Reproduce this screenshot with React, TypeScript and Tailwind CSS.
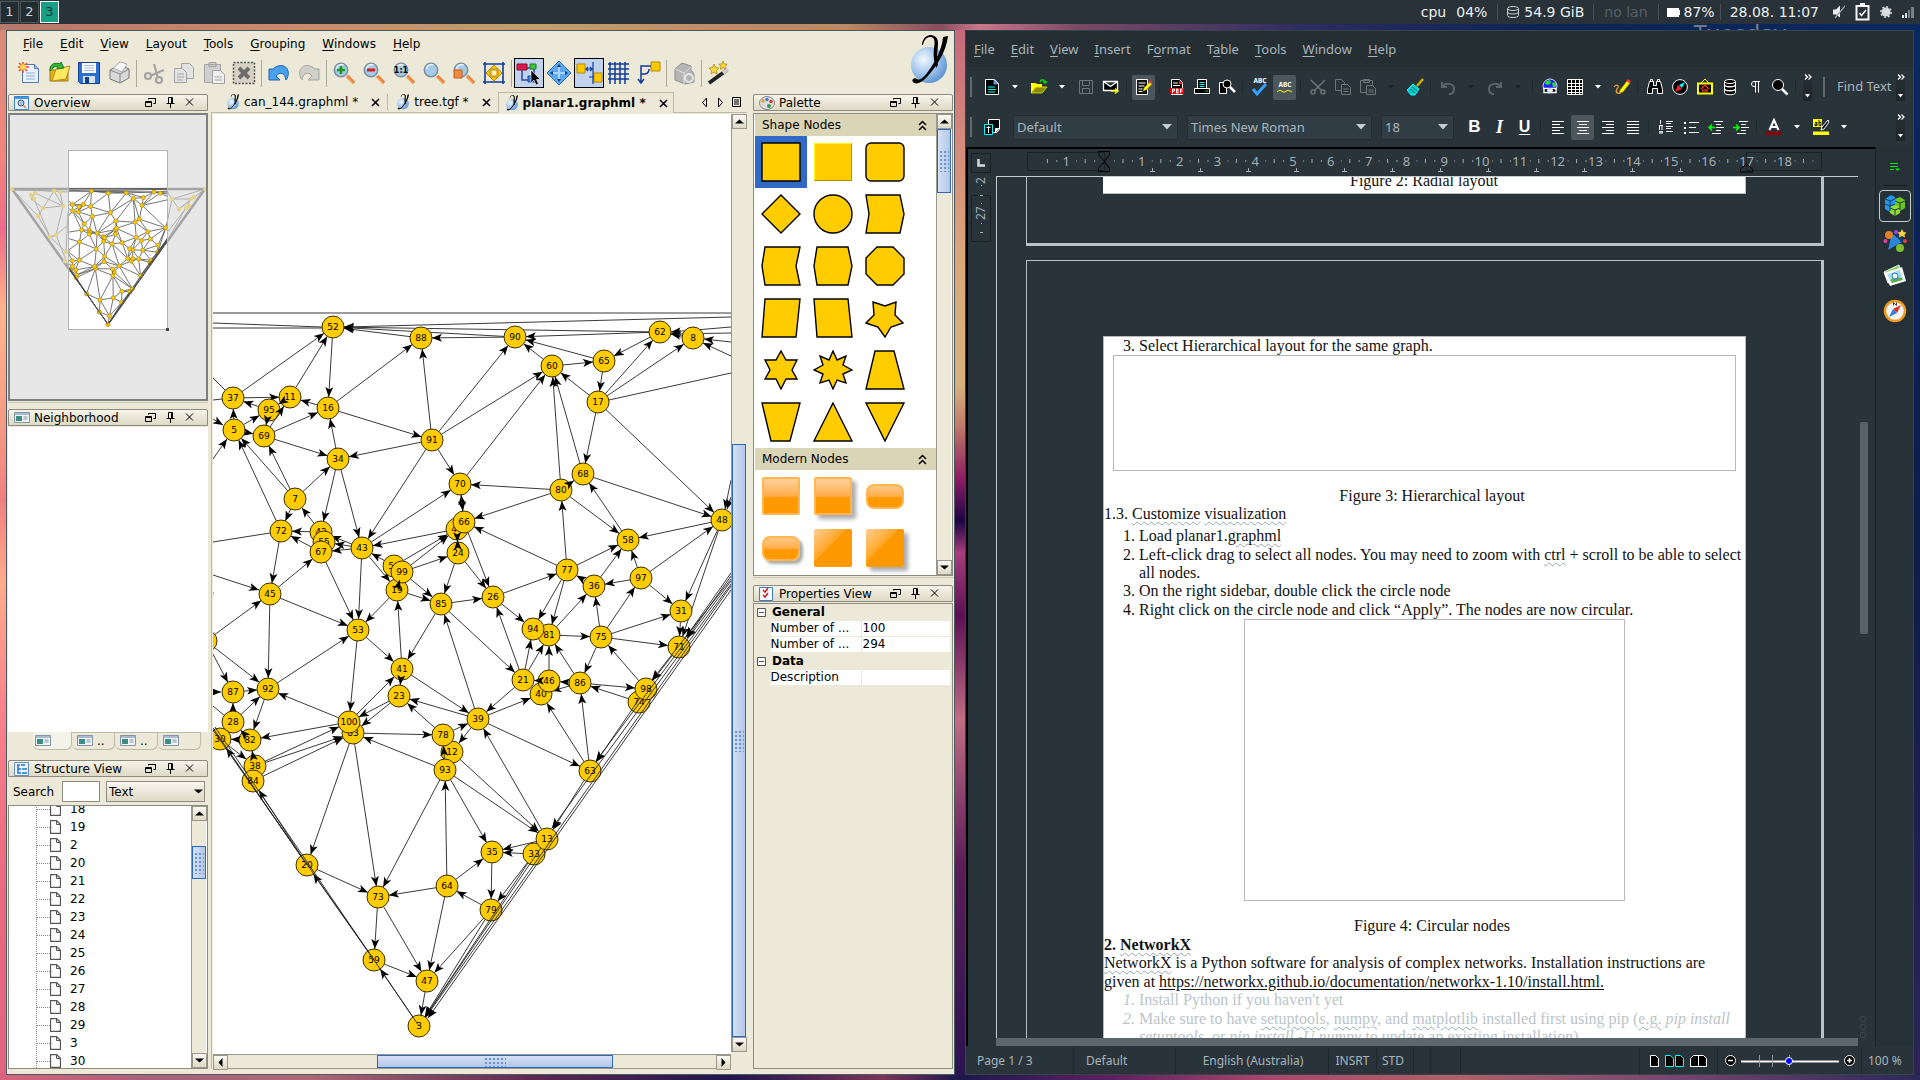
import React from "react";

type P = { children?: React.ReactNode };

/* ---------- graph data ---------- */
const N: Record<string, [number, number]> = {
  "54": [206, 641], "52": [333, 327], "88": [421, 338], "90": [515, 337], "62": [660, 332], "8": [693, 338],
  "65": [604, 361], "17": [598, 402], "60": [552, 366], "37": [233, 398], "11": [290, 397], "95": [269, 410],
  "16": [328, 408], "5": [234, 430], "69": [264, 436], "91": [432, 440], "34": [338, 459], "7": [295, 499],
  "70": [460, 484], "80": [561, 490], "68": [583, 474], "44": [457, 529], "66": [464, 522], "24": [458, 553],
  "72": [281, 531], "42": [321, 532], "55": [324, 542], "67": [321, 552], "43": [362, 548], "50": [394, 566],
  "19": [397, 590], "99": [402, 572], "85": [441, 604], "26": [493, 597], "77": [567, 570], "36": [594, 586],
  "97": [641, 578], "58": [628, 540], "48": [722, 520], "31": [681, 611], "71": [679, 647], "81": [549, 635],
  "94": [533, 629], "75": [601, 637], "45": [270, 594], "53": [358, 630], "41": [402, 669], "21": [523, 680],
  "40": [541, 694], "46": [549, 681], "86": [580, 683], "74": [639, 702], "98": [646, 689], "92": [268, 689],
  "87": [233, 692], "23": [399, 696], "28": [233, 722], "30": [220, 739], "82": [250, 740], "38": [255, 766],
  "84": [253, 781], "83": [353, 733], "100": [349, 722], "12": [452, 752], "78": [443, 735], "93": [445, 770],
  "39": [478, 719], "63": [590, 771], "13": [547, 839], "33": [534, 854], "35": [492, 852], "20": [307, 865],
  "64": [447, 886], "79": [491, 910], "73": [378, 897], "59": [374, 960], "47": [427, 981], "3": [419, 1026],
};
const DRAW = ["54", "52", "88", "90", "62", "8", "65", "17", "60", "37", "95", "11", "16", "5", "69", "91", "34", "7", "70", "80", "68", "44", "66", "24", "72", "42", "55", "67", "43", "50", "19", "99", "85", "26", "77", "36", "97", "58", "48", "31", "71", "81", "94", "75", "45", "53", "41", "21", "40", "46", "86", "74", "98", "92", "87", "23", "28", "30", "82", "38", "84", "83", "100", "12", "78", "93", "39", "63", "33", "13", "35", "20", "64", "79", "73", "59", "47", "3"];
const E =
  "11-52 37-52 52-16 16-88 91-88 16-11 16-91 34-16 69-16 37-11 95-37 5-37 5-95 5-69 69-34 91-34 7-34 7-69 7-5 72-5 7-72 42-7 42-72 67-72 34-42 34-43 91-43 43-70 91-70 91-90 91-60 70-60 60-90 65-90 60-65 65-17 17-60 17-62 17-8 62-65 8-62 90-88 62-90 17-68 17-48 68-48 68-60 80-60 80-70 80-66 80-58 58-68 48-58 77-66 77-80 77-58 36-77 36-58 97-58 97-36 97-48 97-31 75-31 75-36 75-97 75-71 81-75 81-36 77-81 77-94 26-77 26-94 66-26 24-26 66-70 44-43 50-44 99-44 99-24 43-55 43-67 43-42 50-43 43-19 99-85 19-85 24-85 85-26 85-21 85-41 39-85 21-26 21-94 21-81 46-81 86-81 86-46 86-40 75-86 86-98 98-75 74-86 63-86 63-40 39-40 21-39 39-63 39-23 41-39 41-19 53-41 19-53 43-53 67-53 45-67 72-45 45-53 45-92 92-53 53-100 100-41 23-100 23-83 100-92 100-82 92-82 87-92 28-92 28-87 38-100 38-83 84-83 30-38 83-78 78-23 78-39 39-12 93-83 12-13 93-13 93-35 93-73 64-93 64-35 64-73 64-47 79-64 35-79 13-35 33-35 13-39 79-47 79-3 73-47 73-59 59-47 47-3 20-73 83-20 83-73 48-31 48-71 31-71 54-45 54-92 54-87 90-52 88-52 62-52".split(" ");
const OVER = "95-69 69-11 11-95 80-68 70-66 44-24 24-44 19-99 41-23 46-21 93-78 82-28 82-30 38-82 33-79 59-20 3-59 20-84 20-30 71-98 98-63 63-13 13-3 33-3".split(" ");
type L = [number, number, number, number, boolean];
const LOOSE: L[] = [
  [213, 323, 322, 327, false], [213, 328, 322, 328, false], [731, 317, 344, 327, true], [731, 327, 671, 332, true],
  [731, 333, 671, 334, true], [731, 342, 704, 339, true], [731, 356, 703, 343, true], [609, 400, 731, 373, false],
  [213, 378, 225, 390, false], [213, 400, 222, 399, false], [213, 419, 223, 425, true], [213, 459, 227, 439, true],
  [270, 533, 213, 542, false], [213, 575, 259, 590, true], [731, 480, 725, 509, true], [731, 497, 727, 509, true],
  [213, 692, 221, 692, true], [213, 706, 225, 716, false], [213, 592, 208, 630, false],
];
const LONG: L[] = [
  [205, 313, 740, 313, false], [731, 573, 686, 637, true], [731, 576, 687, 638, true], [731, 579, 652, 680, true],
  [731, 581, 596, 761, true], [731, 584, 552, 828, true], [731, 586, 426, 1017, true], [731, 590, 428, 1018, true],
  [213, 728, 307, 865, false], [213, 730, 374, 960, false], [215, 727, 419, 1026, false],
];

function seg(id: string): L {
  const [a, b] = id.split("-");
  const [x1, y1] = N[a], [x2, y2] = N[b];
  const d = Math.hypot(x2 - x1, y2 - y1) || 1;
  const ux = (x2 - x1) / d, uy = (y2 - y1) / d;
  const r = Math.min(11, d / 2 - 1);
  return [x1 + ux * r, y1 + uy * r, x2 - ux * r, y2 - uy * r, true];
}

function Lines({ list, mini }: { list: L[]; mini?: boolean }) {
  return (
    <g stroke={mini ? "#4a4a4a" : "#222"} strokeWidth={mini ? 4 : 0.9}>
      {list.map(([a, b, c, d, arrow], i) => (
        <line key={i} x1={a} y1={b} x2={c} y2={d} markerEnd={arrow && !mini ? "url(#arrow)" : undefined} />
      ))}
    </g>
  );
}

function Graph({ mini }: { mini?: boolean }) {
  return (
    <g>
      <Lines list={[...E.map(seg), ...LOOSE]} mini={mini} />
      {DRAW.map((n) => (
        <g key={n}>
          <circle cx={N[n][0]} cy={N[n][1]} r={11} fill="#ffcc00" stroke={mini ? "#8a7420" : "#3a3000"} strokeWidth={mini ? 3 : 1} />
          {!mini && (
            <text x={N[n][0]} y={N[n][1] + 3} textAnchor="middle" fontSize={9} fill="#000">{n}</text>
          )}
        </g>
      ))}
      <Lines list={[...OVER.map(seg), ...LONG]} mini={mini} />
    </g>
  );
}

/* ---------- yEd pieces ---------- */
const YBG = "bg-[#ece9d8]";

function YLogo({ s }: { s: number }) {
  return (
    <svg width={s} height={s} viewBox="0 0 40 50">
      <defs>
        <radialGradient id="ball" cx=".35" cy=".35" r=".7">
          <stop offset="0" stopColor="#f4f9ff" /><stop offset=".6" stopColor="#9cc2ea" /><stop offset="1" stopColor="#5b93cf" />
        </radialGradient>
      </defs>
      <circle cx="20" cy="30" r="18" fill="url(#ball)" />
      <path d="M14 10C15 4 19 1.500 22 2C26 3 26 7 25 13C24 20 25 27 27 33L29 30C27 22 29 14 29 8C29 2 25 0 21 0C16 1 13 5 13 10z" />
      <path d="M39 1C37 17 28 31 17 43C12 48 7 50 4 47C2 44 6 42 8 44C11 46 15 42 18 38C27 26 33 14 34 2z" />
    </svg>
  );
}

function TitleBar({ title, icon }: { title: string; icon: React.ReactNode }) {
  return (
    <div className="flex h-[17px] shrink-0 items-center rounded-t-xs border border-[#8d8b80] bg-linear-to-b from-[#f6f4ea] to-[#dedac6] pl-[5px] pr-[13px]">
      <span className="flex w-[20px]">{icon}</span>
      <span className="flex-1 text-[12px] leading-4">{title}</span>
      <span className="flex gap-[9px]">
        <button aria-label={"Float " + title}><svg width="11" height="11" viewBox="0 0 11 11" fill="none" stroke="#000"><path d="M.5 4.5h6v5h-6zM.5 5.5h6M3.500 2.500v-1h7v5h-2M3.500 1.500h7" /></svg></button>
        <button aria-label={"Pin " + title}><svg width="11" height="11" viewBox="0 0 11 11" fill="none" stroke="#000"><path d="M3.500.5h4v6h-4zM6.500 1v5M1.500 6.500h8M5.500 7v4" /></svg></button>
        <button aria-label={"Close " + title}><svg width="9" height="11" viewBox="0 0 9 11" fill="none" stroke="#000"><path d="M1 1.500l7 7M8 1.500l-7 7" /></svg></button>
      </span>
    </div>
  );
}

const WinIcon = () => (
  <svg width="16" height="12" viewBox="0 0 16 12"><path d="M.5.5h15v10H.5z" fill="#f2f5f8" stroke="#8493a5" /><path d="M1 1h14v2H1z" fill="#a9bccf" /><path d="M2 4h6v5H2z" fill="#3c8c82" /><path d="M9.500 5h4M9.500 7h4" stroke="#8493a5" /></svg>
);

const DOTS = "bg-[radial-gradient(#6c93d0_0.8px,transparent_1px)] bg-[size:4px_4px]";

function SBtn({ d, label }: { d: string; label: string }) {
  return (
    <button aria-label={label} className="flex size-[15px] shrink-0 items-center justify-center border border-[#9a988a] bg-linear-to-b from-[#fbfaf4] to-[#dcd8c4]">
      <svg width="9" height="9" viewBox="0 0 9 9"><path d={d} /></svg>
    </button>
  );
}
const UP = "M0 6.500L4.500 2.500L9 6.500z", DOWN = "M0 2.500L4.500 6.500L9 2.500z", LEFT = "M6.500 0L2.500 4.500L6.500 9z", RIGHT = "M2.500 0L6.500 4.500L2.500 9z";

function VScroll({ thumb, before, after }: { thumb: string; before: string; after: string }) {
  return (
    <div className="flex w-[15px] shrink-0 flex-col border-l border-[#9a988a] bg-[#ece9d8]">
      <SBtn d={UP} label="Scroll up" />
      <div className={before} />
      <div className={"flex w-full items-center justify-center border border-[#2f66c0] bg-linear-to-r from-[#d4e1f5] to-[#b3c8e6] " + thumb}>
        <div className={"h-[22px] w-[10px] " + DOTS} />
      </div>
      <div className={after} />
      <SBtn d={DOWN} label="Scroll down" />
    </div>
  );
}

const lens = (inner: React.ReactNode) => (
  <g>
    <path d="M15 15l7 7" stroke="#e8843c" strokeWidth="3.6" /><path d="M14.500 16l6.500 6.500" stroke="#fbc08a" strokeWidth="1" />
    <circle cx="9" cy="9" r="6.700" fill="#a5cbe8" stroke="#7b8fa0" strokeWidth="1.500" /><path d="M4.500 8a5 5 0 0 1 7-4" stroke="#e8f5ff" strokeWidth="1.500" fill="none" />
    {inner}
  </g>
);
const YI: Record<string, React.ReactNode> = {
  New: <g><path d="M5.500 3.500h12l4 4v14h-16z" fill="#e8f1fc" stroke="#5578b4" /><path d="M17.500 3.500v4h4" fill="#9fbce4" stroke="#5578b4" /><path d="M9 12h9M9 15h9M9 18h9" stroke="#a9c3e8" strokeWidth="1.500" /><path d="M6 1v11M1 6h11M2 2l8 8M10 2l-8 8" stroke="#f04a2a" strokeWidth="1.500" /><circle cx="6" cy="6" r="3" fill="#ffd24a" /></g>,
  Open: <g><path d="M3 20V9h7l2 2h9v9z" fill="#e0b41c" stroke="#a07c10" /><path d="M5 20l4-12 14-3-4 13z" fill="#ffe75e" stroke="#b28e18" /><path d="M3 10C2 3 8 1 13 3l1-2 3 6-7 1 1-2C8 5 6 6 3 10z" fill="#37b437" stroke="#1d7a1d" /></g>,
  Save: <g><path d="M1.500 1.500h21v21h-19l-2-2z" fill="#2c6fd0" stroke="#12408a" /><path d="M5 2h14v10H5z" fill="#fff" /><path d="M7 4.500h10M7 7h10M7 9.500h10" stroke="#9db9d8" /><path d="M6 15h12v7H6z" fill="#d8e2ee" /><path d="M8 16h4v6H8z" fill="#12408a" /></g>,
  Print: <g><path d="M3 9l9-5 10 4v9l-9 5-10-4z" fill="#d9d9d9" stroke="#777" /><path d="M3 9l10 4v9M13 13l9-5" fill="none" stroke="#888" /><path d="M6 7l7-6 7 2-5 8z" fill="#fafafa" stroke="#aaa" /></g>,
  Cut: <g fill="none" stroke="#a3a3a3" strokeWidth="2.200"><path d="M12 3l4 14M22 9L8 15" /><circle cx="17" cy="19" r="3" /><circle cx="6" cy="15" r="3" /></g>,
  Copy: <g fill="#e2e2e2" stroke="#a3a3a3"><path d="M9.500 2.500h8l4 4v11h-12z" /><path d="M2.500 7.500h8l4 4v10h-12z" /><path d="M5 13h7M5 16h7M5 19h6" /></g>,
  Paste: <g fill="#cfcfcf" stroke="#a3a3a3"><path d="M2.500 3.500h16v18h-16zM7 1.500h7v4H7z" /><path d="M10.500 9.500h8l4 4v9h-12z" fill="#eee" /><path d="M13 16h7M13 19h7" /></g>,
  Delete: <g><path d="M1.500 1.500h21v21h-21z" fill="#d5d2c4" stroke="#555" strokeDasharray="2 1.500" strokeWidth="1.500" /><path d="M7 7l10 10M17 7L7 17" stroke="#6c6c6c" strokeWidth="4" /></g>,
  Undo: <path d="M2 8v11h11l-4-4c4-5 9-3 10 4 7-10-3-20-13-11z" fill="#4aa2ee" stroke="#1e63ad" />,
  Redo: <path d="M22 8v11H11l4-4c-4-5-9-3-10 4C-2 9 8-1 18 8z" fill="#d0d0c8" stroke="#a5a5a0" />,
  "Zoom in": lens(<path d="M9 5v8M5 9h8" stroke="#1c9a1c" strokeWidth="2.600" />),
  "Zoom out": lens(<path d="M5 9h8" stroke="#d02020" strokeWidth="3" />),
  "Zoom 1:1": lens(<text x="9" y="12" fontSize="8" fontWeight="700" textAnchor="middle">1:1</text>),
  Zoom: lens(null),
  "Zoom area": lens(<path d="M2 9h8v8H2z" fill="#f08a3c" stroke="#c2601c" />),
  Fit: <g><path d="M3 1v22M21 1v22M1 3h22M1 21h22" stroke="#123c9c" strokeWidth="1.600" /><path d="M12 4l4 4H8zM12 20l4-4H8zM4 12l4-4v8zM20 12l-4-4v8z" fill="#ffc800" stroke="#c08a00" /><path d="M9 9h6v6H9z" fill="#fff2b0" stroke="#c08a00" /></g>,
  Select: <g><path d="M5 7h12v12H5z" fill="none" stroke="#2c4aa0" strokeWidth="1.500" /><path d="M0 3h10v6H0z" fill="#e0184c" stroke="#7c0c2c" /><path d="M13 3h6v5h-6z" fill="#3cc83c" stroke="#1c7c1c" /><path d="M11 15h7v6h-7z" fill="#3c7cd8" stroke="#1c4a8c" /><path d="M14 9v13l3-3 2 5 2.500-1-2-4.500h4z" fill="#000" stroke="#fff" strokeWidth=".6" /></g>,
  Move: <g><path d="M12 0l12 12-12 12L0 12z" fill="#5aa8f0" stroke="#2e6cb8" /><path d="M12 4v16M4 12h16" stroke="#a8d4ff" strokeWidth="2" /><path d="M12 3l2 3h-4zM12 21l2-3h-4zM3 12l3-2v4zM21 12l-3-2v4z" fill="#123c7c" /></g>,
  Snap: <g><path d="M0 3h8v9H0zM17 12h8v9h-8z" fill="#ffc800" stroke="#b28a00" /><path d="M16 1v22M9 8h6M11 6L9 8l2 2M13 6l2 2-2 2M12 16h5" fill="none" stroke="#123c9c" strokeWidth="1.200" /></g>,
  Grid: <path d="M3 1v22M8 1v22M13 1v22M18 1v22M1 3h21M1 8h21M1 13h21M1 18h21" stroke="#123c9c" strokeWidth="1.500" fill="none" />,
  Orthogonal: <g><path d="M14 1h9v9h-9z" fill="#ffc800" stroke="#b28a00" /><path d="M14 5H4v17M1 18l3 4 3-4M4 13h4a5 5 0 0 0 4-5" stroke="#123c9c" strokeWidth="1.500" fill="none" /></g>,
  Package: <g><path d="M3 8l7-6 9 3v4l3 4v8l-9 2-10-4z" fill="#b5b5b5" stroke="#8d8d8d" /><path d="M3 8l9 4v11M12 12l7-6" stroke="#ddd" fill="none" /><circle cx="17" cy="17" r="4" fill="none" stroke="#e5e5e5" strokeWidth="2" /></g>,
  Wand: <g><path d="M2 22L20 9" stroke="#222" strokeWidth="4" /><path d="M16 12l5-4" stroke="#ccc" strokeWidth="4" /><path d="M7 3l1.500 3.500 3.500.500-2.500 2.500.5 3.500-3-2-3 2 .5-3.500L2 7l3.500-.5zM16 0l1.200 3 3 .3-2.200 2 .6 3-2.600-1.700-2.600 1.700.6-3-2.200-2 3-.3z" fill="#ffd83c" stroke="#b28a10" strokeWidth=".8" /></g>,
};
const YTOOLS = ["New", "Open", "Save", "Print", "|", "Cut", "Copy", "Paste", "Delete", "|", "Undo", "Redo", "|", "Zoom in", "Zoom out", "Zoom 1:1", "Zoom", "Zoom area", "Fit", "|", "Select", "Move", "Snap", "Grid", "Orthogonal", "|", "Package", "|", "Wand"];

function Menu({ label, at = 0 }: { label: string; at?: number }) {
  return <>{label.slice(0, at)}<span className="underline underline-offset-2">{label[at]}</span>{label.slice(at + 1)}</>;
}

const SHAPES: React.ReactNode[] = [
  <path d="M1 1h38v38H1z" />,
  <g stroke="none"><path d="M1 1h38v38H1z" /><path d="M1 1h38v1H2v37H1z" fill="#ffff00" /><path d="M39 1v38H1l1-1h36V2z" fill="#b38f00" /></g>,
  <rect x="1" y="1" width="38" height="38" rx="5" />,
  <path d="M20 1l19 19-19 19L1 20z" />,
  <circle cx="20" cy="20" r="19" />,
  <path d="M1 1h34l4 19-4 19H1l3-19z" />,
  <path d="M4 1h35l-4 19 4 19H4L1 20z" />,
  <path d="M4 1h31l4 19-4 19H4L1 20z" />,
  <path d="M12 1h16l11 11v16L28 39H12L1 28V12z" />,
  <path d="M4 1h35l-4 38H1z" />,
  <path d="M1 1h34l4 38H4z" />,
  <path d="M8 4l12 4 11-4-1 13 8 8-12 4-6 10-7-10-12-4 8-8z" />,
  <path d="M20 1l5 9h11l-5 10 5 9H25l-5 10-5-10H4l5-9-5-10h11z" />,
  <path d="M20 1l4 9 9-4-3 9 9 5-9 4 3 9-9-3-4 9-4-9-9 3 3-9-9-4 9-5-3-9 9 4z" />,
  <path d="M10 1h19l10 38H1z" />,
  <path d="M1 1h38l-10 38H10z" />,
  <path d="M20 1l19 38H1z" />,
  <path d="M1 1h38L20 39z" />,
];

const MODERN: [string, string][] = [
  ["Bevel", "h-[38px] rounded-xs border-2 border-[#ffb650] bg-linear-to-b from-[#ffd09a] from-0% via-[#ffad48] via-50% to-[#ff9900] to-55%"],
  ["Bevel with shadow", "h-[38px] rounded-xs border-2 border-[#ffb650] bg-linear-to-b from-[#ffd09a] from-0% via-[#ffad48] via-50% to-[#ff9900] to-55% shadow-[4px_4px_4px_#0005]"],
  ["Pill", "h-[25px] rounded-lg border-2 border-[#ffb650] bg-linear-to-b from-[#ffc885] from-0% via-[#ffae45] via-50% to-[#ff9900] to-55%"],
  ["Pill with shadow", "h-[25px] rounded-lg border-2 border-[#ffb650] bg-linear-to-b from-[#ffc885] from-0% via-[#ffae45] via-50% to-[#ff9900] to-55% shadow-[3px_3px_3px_#0005]"],
  ["Glass", "h-[38px] rounded-xs bg-[linear-gradient(135deg,#ffcf96_0%,#ffa726_42%,#ff9900_44%)]"],
  ["Glass with shadow", "h-[38px] rounded-xs bg-[linear-gradient(135deg,#ffcf96_0%,#ffa726_42%,#ff9900_44%)] shadow-[4px_4px_4px_#0005]"],
];

function GroupHead({ t }: { t: string }) {
  return (
    <div className="flex h-[22px] items-center justify-between bg-[#dbd5b8] pl-[7px] pr-[9px] text-[12px]">
      <span>{t}</span>
      <svg width="9" height="11" viewBox="0 0 9 11" fill="none" stroke="#000" strokeWidth="1.500"><path d="M1 5l3.500-3.500L8 5M1 10l3.500-3.500L8 10" /></svg>
    </div>
  );
}

function EditorTab({ name, active }: { name: string; active?: boolean }) {
  return (
    <div className={active ? "-mb-px flex h-[21px] items-center gap-[3px] border border-b-0 border-[#bcb9a4] bg-[#ece9d8] px-[5px] font-bold" : "flex h-[20px] items-center gap-[3px] px-[5px]"}>
      <YLogo s={16} />
      <span className="whitespace-pre text-[12px]">{name}</span>
      <button aria-label={"Close " + name} className="ml-[10px]"><svg width="9" height="9" viewBox="0 0 9 9" stroke="#000" strokeWidth="1.600"><path d="M1 1l7 7M8 1l-7 7" /></svg></button>
    </div>
  );
}

const TREE = ["18", "19", "2", "20", "21", "22", "23", "24", "25", "26", "27", "28", "29", "3", "30"];
const FAR: [number, number][] = [[12, 189], [205, 189], [31, 195], [34, 199], [35, 193], [54, 191], [60, 192], [43, 208], [63, 206], [38, 216], [50, 237], [56, 235], [66, 252], [65, 261], [172, 199], [191, 199], [194, 197], [179, 209], [186, 208], [189, 206]];

function YEd() {
  return (
    <section className={"flex min-w-0 flex-1 flex-col border border-[#4c5a60] text-black font-['DejaVu_Sans',sans-serif] " + YBG}>
      <div className="flex shrink-0">
        <div className="flex-1">
          <nav className="flex h-[25px] items-center gap-px pl-[8px] text-[12px]">
            {["File", "Edit", "View", "Layout", "Tools", "Grouping", "Windows", "Help"].map((m) => (
              <button key={m} className="px-2"><Menu label={m} /></button>
            ))}
          </nav>
          <div className="flex h-[34px] items-center pl-[7px]">
            {YTOOLS.map((t, i) =>
              t === "|" ? (
                <span key={i} className="mx-[2px] h-[27px] w-px bg-[#aca899]" />
              ) : (
                <button key={i} aria-label={t} className={"flex size-[30px] items-center justify-center " + (t === "Select" || t === "Snap" ? "border border-black bg-[#c1d2ee]" : "")}>
                  <svg width="24" height="24" viewBox="0 0 24 24" className="overflow-visible">{YI[t]}</svg>
                </button>
              )
            )}
          </div>
        </div>
        <div className="pt-[4px]"><YLogo s={50} /></div>
      </div>

      <div className="flex min-h-0 flex-1 pb-[5px] pt-[2px]">
        {/* left dock */}
        <div className="flex w-[201px] shrink-0 flex-col pl-px pt-[2px]">
          <TitleBar title="Overview" icon={<svg width="15" height="14" viewBox="0 0 15 14"><path d="M.5.5h14v13H.5z" fill="#e6f1fb" stroke="#3b7fc4" /><path d="M1 1h13v2H1z" fill="#3b9be8" /><circle cx="7" cy="7" r="3" fill="#9cc8ee" stroke="#557" /><path d="M9 9l3 3" stroke="#e08030" strokeWidth="1.500" /></svg>} />
          <div className="mt-[2px] h-[288px] shrink-0 overflow-hidden border-2 border-[#808080] bg-[#e7e7e7]">
            <svg className="h-full w-full">
              <defs><clipPath id="view"><rect x="69" y="151" width="98" height="178" /></clipPath><filter id="soft"><feGaussianBlur stdDeviation=".6" /></filter></defs>
              <g transform="translate(-10 -115)">
                <g filter="url(#soft)">
                  <path d="M12 189L108 324L205 189zM12 190l42 1 9 15-28-13-4 6 12 9 20-2-3-14M34 199l16 38 6-2 7-29M38 216l12 21 16 15 2-40M43 208l-5 8M56 235l12-10M50 237l6-2 12 30M54 191l-11 17M205 189l-33 10-5-8M205 189l-26 20 12-10-19 0 7 10M191 199l-24 42M186 208l-19 25M172 199l-5 24M12 189l56 3M12 189l26 27" fill="none" stroke="#b0b0b0" strokeWidth="1" />
                  <path d="M12 189L108 324L205 189M12 189h193" fill="none" stroke="#a4a4a4" strokeWidth="2.500" />
                  {FAR.map(([x, y], i) => <circle key={i} cx={x} cy={y} r="2.200" fill="#e3d38c" />)}
                </g>
                <rect x="68.500" y="150.500" width="99" height="179" fill="#fff" stroke="#b5b5b5" />
                <g clipPath="url(#view)">
                  <path d="M12 189L108 324L205 189z" fill="none" stroke="#333" />
                  <g transform="translate(27.900 128.600) scale(.191)"><Graph mini /></g>
                </g>
                <path d="M166 328h3v3h-3z" fill="#444" />
              </g>
            </svg>
          </div>
          <div className="mt-px h-px shrink-0 bg-[#c9c6b4]" />
          <div className="mt-[6px] flex shrink-0 flex-col">
            <TitleBar title="Neighborhood" icon={<WinIcon />} />
            <div className="mt-px h-[305px] bg-white" />
            <div className="flex h-[18px] pl-[25px]">
              <span className="flex w-[39px] items-center justify-start rounded-b-md border-b border-r border-[#bcb9a4] bg-[#f4f3ea] pl-[2px]"><WinIcon /></span>
              {["..", "..", ""].map((d, i) => (
                <span key={i} className="flex w-[43px] items-center gap-1 rounded-b-md border-b border-r border-t border-[#bcb9a4] pl-[5px] text-[12px] leading-4"><WinIcon />{d}</span>
              ))}
            </div>
          </div>
          <div className="mt-[10px] flex min-h-0 flex-1 flex-col">
            <TitleBar title="Structure View" icon={<svg width="15" height="14" viewBox="0 0 15 14"><path d="M.5.5h14v13H.5z" fill="#eaf3fc" stroke="#6a8fbc" /><path d="M3 3h3M4 3v8h3M4 7h3M8 7h5M8 11h5M7 3h4" stroke="#2277cc" fill="none" strokeWidth="1.500" /></svg>} />
            <div className="flex h-[28px] shrink-0 items-center pl-[5px] pr-[3px] pt-px text-[12px]">
              <label htmlFor="search" className="w-[49px]">Search</label>
              <input id="search" className="h-[21px] w-[38px] border border-[#8d8b80] bg-white" />
              <div className="relative ml-[6px] flex-1">
                <select aria-label="Search in" className="h-[21px] w-full appearance-none border border-[#8d8b80] bg-linear-to-b from-[#f8f6ee] to-[#dedac6] pl-[2px] text-[12px]"><option>Text</option></select>
                <svg className="pointer-events-none absolute right-[2px] top-[6px]" width="9" height="9" viewBox="0 0 9 9"><path d={DOWN} /></svg>
              </div>
            </div>
            <div className="flex min-h-0 flex-1 overflow-hidden border border-[#8d8b80] bg-white pr-px">
              <ul className="-mt-[6px] ml-[27px] flex-1 border-l border-dotted border-[#888] text-[12px]">
                {TREE.map((t) => (
                  <li key={t} className="flex h-[18px] items-center">
                    <span className="w-[13px] border-t border-dotted border-[#888]" />
                    <svg width="11" height="14" viewBox="0 0 11 14"><path d="M.5.5h6l4 4v9H.5z" fill="#fff" stroke="#555" strokeWidth="1.300" /><path d="M6.500.5v4h4" fill="none" stroke="#555" /></svg>
                    <span className="ml-[9px]">{t}</span>
                  </li>
                ))}
              </ul>
              <VScroll before="h-[25px]" thumb="h-[33px]" after="flex-1" />
            </div>
          </div>
        </div>

        {/* editor */}
        <div className="ml-[3px] flex min-w-0 flex-1 flex-col">
          <div className="flex h-[21px] shrink-0 items-end border-b border-[#bcb9a4] pl-[9px] pr-[6px]">
            <EditorTab name="can_144.graphml *" />
            <span className="mb-[2px] ml-[2px] mr-[2px] h-[16px] w-px bg-[#bcb9a4]" />
            <EditorTab name="tree.tgf *" />
            <span className="w-[2px]" />
            <EditorTab name="planar1.graphml *" active />
            <span className="mb-[5px] ml-auto flex items-center gap-[7px]">
              <button aria-label="Previous tab"><svg width="9" height="9" viewBox="0 0 9 9" fill="none" stroke="#000"><path d={LEFT} /></svg></button>
              <button aria-label="Next tab"><svg width="9" height="9" viewBox="0 0 9 9" fill="none" stroke="#000"><path d={RIGHT} /></svg></button>
              <button aria-label="Tab list"><svg width="9" height="10" viewBox="0 0 9 10" fill="none" stroke="#000"><path d="M.5.5h8v9h-8zM2 3h5M2 5h5M2 7h5" /></svg></button>
            </span>
          </div>
          <div className="flex min-h-0 flex-1 border-l border-[#bcb9a4] pl-px pr-px pt-px">
            <div className="flex min-w-0 flex-1 flex-col">
              <div className="min-h-0 flex-1 bg-white">
                <svg className="h-full w-full">
                  <defs><marker id="arrow" markerUnits="userSpaceOnUse" markerWidth="12" markerHeight="10" refX="10" refY="4.500" orient="auto"><path d="M0 .5L10 4.500L0 8.500L2.500 4.500z" fill="#000" /></marker></defs>
                  <g transform="translate(-213 -114)"><Graph /></g>
                </svg>
              </div>
              <div className="flex h-[15px] shrink-0 border-y border-[#9a988a]">
                <SBtn d={LEFT} label="Scroll left" />
                <div className="w-[149px]" />
                <div className="flex w-[236px] items-center justify-center border border-[#2f66c0] bg-linear-to-b from-[#d4e1f5] to-[#b3c8e6]"><div className={"h-[10px] w-[22px] " + DOTS} /></div>
                <div className="flex-1" />
                <SBtn d={RIGHT} label="Scroll right" />
              </div>
            </div>
            <div className="flex pb-[17px]"><VScroll before="h-[315px]" thumb="flex-1" after="h-0" /></div>
          </div>
        </div>

        {/* right dock */}
        <div className="ml-[6px] flex w-[201px] shrink-0 flex-col pr-px pt-[2px]">
          <TitleBar title="Palette" icon={<svg width="16" height="14" viewBox="0 0 16 14"><ellipse cx="8" cy="7" rx="7.500" ry="6.500" fill="#ddd" stroke="#888" /><circle cx="4" cy="5" r="1.700" fill="#e8a020" /><circle cx="8" cy="3.500" r="1.700" fill="#3a7fe0" /><circle cx="12" cy="5.500" r="1.700" fill="#e03030" /><circle cx="10" cy="10" r="2" fill="#30a040" /></svg>} />
          <div className="mt-[2px] flex h-[463px] shrink-0 overflow-hidden border border-[#8d8b80] bg-white px-px">
            <div className="flex-1">
              <GroupHead t="Shape Nodes" />
              <div className="grid grid-cols-[52px_52px_52px]">
                {SHAPES.map((s, i) => (
                  <button key={i} aria-label={"Shape " + (i + 1)} className={"flex size-[52px] items-center justify-center " + (i === 0 ? "bg-[#316ac5]" : "")}>
                    <svg width="40" height="40" viewBox="0 0 40 40" fill="#ffcc00" stroke="#000" strokeWidth="1.400">{s}</svg>
                  </button>
                ))}
              </div>
              <GroupHead t="Modern Nodes" />
              <div className="grid grid-cols-[52px_52px_52px]">
                {MODERN.map(([label, cls]) => (
                  <button key={label} aria-label={label} className="flex size-[52px] items-center justify-center">
                    <span className={"block w-[38px] " + cls} />
                  </button>
                ))}
              </div>
            </div>
            <VScroll before="h-0" thumb="h-[64px]" after="flex-1" />
          </div>
          <div className="mt-px h-px shrink-0 bg-[#c9c6b4]" />
          <div className="mt-[7px] flex min-h-0 flex-1 flex-col">
            <TitleBar title="Properties View" icon={<svg width="14" height="14" viewBox="0 0 14 14"><path d="M.5.5h13v13H.5z" fill="#f3f7fc" stroke="#3b7fc4" /><path d="M4 3l2 2 3-4M4 8l2 2 3-4" stroke="#d02020" fill="none" strokeWidth="1.500" /></svg>} />
            <div className="mt-px flex-1 border border-[#8d8b80] pl-[3px] pr-px text-[12px]">
              <table className="w-full table-fixed border-collapse">
                <colgroup><col className="w-[13px]" /><col className="w-[91px]" /><col /></colgroup>
                <tbody>
                  {[["General"], ["Number of ...", "100"], ["Number of ...", "294"], ["Data"], ["Description", ""]].map((r, i) =>
                    r.length === 1 ? (
                      <tr key={i} className="h-4 leading-4"><td className="p-0"><svg width="9" height="9" viewBox="0 0 9 9" fill="#fff" stroke="#555"><path d="M.5.5h8v8h-8zM2 4.500h5" /></svg></td><th colSpan={2} className="p-0 pl-[2px] text-left font-bold">{r[0]}</th></tr>
                    ) : (
                      <tr key={i} className="h-4 leading-[15px]"><td className="p-0" /><td className="border border-[#ece9d8] bg-white p-0">{r[0]}</td><td className="border border-[#ece9d8] bg-white p-0 pl-px">{r[1]}</td></tr>
                    )
                  )}
                </tbody>
              </table>
            </div>
          </div>
        </div>
      </div>
    </section>
  );
}

/* ---------- Writer ---------- */
const lines = (rows: [number, number, number][]) => <path d={rows.map(([x, y, w]) => `M${x} ${y}h${w}`).join("")} stroke="#fff" strokeWidth="1" />;
const G: Record<string, React.ReactNode> = {
  New: <g><path d="M1.500.5h9l4 4v11h-13z" fill="#000" stroke="#fff" /><path d="M10 1l4 4h-4z" fill="#3a6cff" stroke="#fff" strokeWidth=".5" /><path d="M4 8h7M4 10.500h8M4 13h7" stroke="#0ff" /></g>,
  Open: <g><path d="M0 4h5l1 1h5v3H5l-5 6z" fill="#ff0" /><path d="M5 8h11l-5 6H0z" fill="#8a8a00" stroke="#ff0" strokeWidth=".7" /><path d="M9 3c1-3 4-3 5 0M12 3h4M14 5V2" fill="none" stroke="#0d0" strokeWidth="1.300" /></g>,
  Save: <g fill="none" stroke="#6b757a"><path d="M1.500 1.500h13v13h-13zM4.500 1.500v5h7v-5M4.500 14.500v-5h7v5" /></g>,
  Mail: <g><path d="M.5 2.500h14v9H.5zM.5 2.500l7 5 7-5" fill="#000" stroke="#fff" strokeWidth="1.300" /><path d="M8 12h5M12 9.500l3 2.500-3 2.500" stroke="#ff0" strokeWidth="1.500" fill="none" /></g>,
  Edit: <g><path d="M.5.5h11v15H.5z" fill="#111" stroke="#fff" /><path d="M2.500 4h7M2.500 7h6M2.500 10h4M2.500 12.500h4" stroke="#fff" /><path d="M7 12l1-3 6-6 2 2-6 6z" fill="#ff0" stroke="#b08000" strokeWidth=".6" /><path d="M13 3l1.500-1.500 2 2L15 5z" fill="#f33" /></g>,
  PDF: <g><path d="M2.500.5h8l3 3v12h-11z" fill="#000" stroke="#fff" /><path d="M10 1l4 4h-4z" fill="#f22" /><path d="M4 4h5M4 6.500h7" stroke="#fff" /><path d="M1 9h14v6H1z" fill="#e00" /><path d="M3.500 14v-4h2v2h-2M7.500 10v4h1.500v-4zM11.500 14v-4h2M11.500 12h2" stroke="#fff" fill="none" /></g>,
  Print: <g><path d="M3.500.5h9v9h-9z" fill="#000" stroke="#fff" /><path d="M5.500 3.500h5M5.500 5.500h5M5.500 7.500h5" stroke="#0ff" /><path d="M.5 9.500h15v5H.5z" fill="#000" stroke="#fff" /><path d="M11 12h3" stroke="#0d0" /></g>,
  Preview: <g><path d="M.5 3.500h7v11h-7z" fill="#000" stroke="#fff" /><circle cx="8" cy="5" r="4" fill="#000" stroke="#fff" /><path d="M11 8l5 5" stroke="#fff" strokeWidth="2.500" /></g>,
  Spelling: <g><text x="8" y="4" fontSize="6.500" fontWeight="700" fill="#fff" textAnchor="middle">ABC</text><path d="M1 10l4 5L14 5" stroke="#33a1ff" strokeWidth="3" fill="none" /></g>,
  "Auto spelling": <g><text x="8" y="8" fontSize="6.500" fontWeight="700" fill="#fff" textAnchor="middle">ABC</text><path d="M0 13l2-1.500h2l2 1.500h2l2-1.500h2l3 1.500" stroke="#ff0" fill="none" /></g>,
  Cut: <g fill="none" stroke="#6b757a" strokeWidth="1.500"><path d="M1 1l11 11M15 1L4 12" /><circle cx="3" cy="13" r="2" /><circle cx="13" cy="13" r="2" /></g>,
  Copy: <g fill="#2a343a" stroke="#6b757a"><path d="M.5.5h6l3 3v8h-9z" /><path d="M6.500 5.500h6l3 3v7h-9zM8.500 10h5M8.500 12.500h5" /></g>,
  Paste: <g fill="#2a343a" stroke="#6b757a"><path d="M.5 1.500h12v12H.500zM3.500.5h6v3h-6z" /><path d="M6.500 6.500h6l3 3v6h-9zM8.500 11h5M8.500 13h5" /></g>,
  Brush: <g><path d="M16 0L10 7" stroke="#c8b400" strokeWidth="2.500" /><path d="M6 5l6 5-4 6H4l-4-5z" fill="#0cc" stroke="#0ff" /><path d="M3 10l5 4M5 8l5 4" stroke="#066" /></g>,
  Undo: <path d="M2 3v5h5M2 8c3-5 12-4 12 2 0 3-2 5-5 5" fill="none" stroke="#59646a" strokeWidth="2" />,
  Redo: <path d="M14 3v5H9M14 8C11 3 2 4 2 10c0 3 2 5 5 5" fill="none" stroke="#59646a" strokeWidth="2" />,
  Hyperlink: <g><circle cx="8" cy="7" r="7" fill="#22f" stroke="#fff" strokeWidth=".8" /><path d="M4 2l4-1 1 3-3 2-3-1zM10 4l4-1v5h-3z" fill="#2d2" /><path d="M2 9.500h5v4H2zM9 9.500h5v4H9zM5 11.500h6" fill="#000" stroke="#fff" strokeWidth="1.400" /></g>,
  Table: <g><path d="M.5.5h15v15H.5z" fill="#000" stroke="#fff" /><path d="M4.500 0v16M8.500 0v16M12.500 0v16M0 4.500h16M0 7.500h16M0 10.500h16M0 13.500h16" stroke="#fff" /></g>,
  Draw: <g><path d="M6 11l7-9 3 2-7 9-4 1z" fill="#ff0" stroke="#a08000" strokeWidth=".6" /><path d="M12 2l2-2 3 2-1.500 2z" fill="#f33" /><path d="M0 8c3-4 6-1 3 2-2 3 0 5 4 4" stroke="#fa3" fill="none" strokeWidth="1.200" /></g>,
  Find: <g fill="#000" stroke="#fff"><path d="M2.500 2.500h4v4h3v-4h4l2 8v4h-5v-5h-5v5h-5v-4z" /><path d="M3.500.5h2v2h-2zM10.500.5h2v2h-2z" /></g>,
  Navigator: <g><circle cx="8" cy="8" r="7.400" fill="#000" stroke="#fff" /><path d="M13 3L7 6l3 3z" fill="#0ff" /><path d="M3 13l3-7 4 4z" fill="#f22" /></g>,
  Gallery: <g><path d="M4 4l4-4 4 4" fill="none" stroke="#ff0" /><path d="M1 4.500h14v10H1z" fill="#000" stroke="#ff0" strokeWidth="2" /><path d="M4 10l4-4 4 4M6 10v3M8 10v3M10 10v3" stroke="#f33" fill="none" strokeWidth="1.300" /></g>,
  Sources: <g fill="#000" stroke="#fff"><path d="M2.500 2.500v11c0 3 11 3 11 0v-11" /><path d="M2.500 5.500c0 3 11 3 11 0M2.500 9.500c0 3 11 3 11 0" fill="none" strokeWidth="1.400" /><ellipse cx="8" cy="2.500" rx="5.500" ry="2" /></g>,
  Marks: <path d="M13 2.500H7a2.500 2.500 0 0 0 0 5h1.500M8.500 13.500v-11M11.500 2.500v11" stroke="#fff" fill="none" />,
  Zoom: <g><circle cx="6" cy="6" r="5.500" fill="#000" stroke="#fff" /><path d="M10 10l5.500 5.500" stroke="#fff" strokeWidth="2.500" /></g>,
  Styles: <g><path d="M4.500.5h11v10l-3 3h-8z" fill="#000" stroke="#fff" /><path d="M15.500 9.500h-4v4" stroke="#fff" fill="#fff" /><path d="M.5 5.500h8v10h-8z" fill="#000" stroke="#0ff" /><path d="M2.500 8.500h4M4.500 7v7" stroke="#fff" /></g>,
  Left: lines([[2, 2.5, 12], [2, 5.5, 8], [2, 8.5, 12], [2, 11.5, 8], [2, 14.5, 12]]),
  Center: lines([[2, 2.5, 12], [4, 5.5, 8], [2, 8.5, 12], [4, 11.5, 8], [2, 14.5, 12]]),
  Right: lines([[2, 2.5, 12], [6, 5.5, 8], [2, 8.5, 12], [6, 11.5, 8], [2, 14.5, 12]]),
  Justify: lines([[2, 2.5, 12], [2, 5.5, 12], [2, 8.5, 12], [2, 11.5, 12], [2, 14.5, 12]]),
  Numbering: <g>{lines([[8, 2.5, 7], [8, 4.5, 5], [8, 7.5, 7], [8, 9.5, 5], [8, 12.5, 7]])}<path d="M2.500 1v4M1 6.500h4M1.500 7v4M4 7v4M1 13h4M2 12v3M4 12v3" stroke="#fff" /></g>,
  Bullets: <g>{lines([[6, 3.5, 10], [6, 8.5, 7], [6, 13.5, 10]])}<path d="M1 3h2v2H1zM1 8h2v2H1zM1 13h2v2H1z" fill="#fff" /></g>,
  "Decrease indent": <g>{lines([[6, 2.5, 9], [8, 5.5, 5], [8, 8.5, 8], [8, 11.5, 5], [4, 14.5, 9]])}<path d="M7 8.500H1M4 5.500l-3 3 3 3" stroke="#0f0" strokeWidth="1.500" fill="none" /></g>,
  "Increase indent": <g>{lines([[6, 2.5, 9], [8, 5.5, 5], [8, 8.5, 8], [8, 11.5, 5], [4, 14.5, 9]])}<path d="M0 8.500h6M3 5.500l3 3-3 3" stroke="#0f0" strokeWidth="1.500" fill="none" /></g>,
  "Font color": <g><path d="M3.500 11L8 1l4.500 10M5 8h6" stroke="#fff" strokeWidth="2" fill="none" /><path d="M0 12.500h16v3.500H0z" fill="#8b0000" /></g>,
  Highlight: <g><path d="M0 0h9v8H0z" fill="#ff0" /><path d="M2 3.500h2v3H2v-1.500h2M6 1v5.500h2V3.500H6" stroke="#000" fill="none" strokeWidth=".9" /><path d="M15 1l-6 7-1 3 3-1 5-7z" fill="#000" stroke="#fff" /><path d="M0 12.500h16v3.500H0z" fill="#ff0" /></g>,
};
const ROW1 = "New v Open v Save Mail | *Edit | PDF Print Preview | Spelling *Auto_spelling | Cut Copy Paste w Brush | Undo w Redo w | Hyperlink Table v Draw | Find Navigator Gallery Sources Marks Zoom |".split(" ");
const ROW2 = "| Left *Center Right Justify | Numbering Bullets Decrease_indent Increase_indent | Font_color v Highlight v".split(" ");

function Tools({ items }: { items: string[] }) {
  return (
    <>
      {items.map((t, i) => {
        if (t === "|") return <span key={i} className="mx-[3px] h-[14px] w-[2px] shrink-0 border-l border-[#20292e]" />;
        if (t === "v" || t === "w")
          return <button key={i} aria-label="More" className="flex h-[26px] w-[22px] shrink-0 items-center justify-center"><svg width="6" height="4" viewBox="0 0 6 4"><path d="M0 0h6L3 3.500z" fill={t === "v" ? "#fff" : "#1a2226"} /></svg></button>;
        const on = t[0] === "*";
        const name = t.replace("*", "").replace("_", " ");
        return (
          <button key={i} aria-label={name} className="flex h-[26px] w-[25px] shrink-0 items-center justify-center">
            <span className={"flex h-[25px] w-[23px] items-center justify-center rounded-xs " + (on ? "bg-[#4b575d]" : "")}>
              <svg width="16" height="16" viewBox="0 0 16 16" className="overflow-visible">{G[name]}</svg>
            </span>
          </button>
        );
      })}
    </>
  );
}

const Grip = () => <span className="mx-[4px] h-[20px] w-[2px] shrink-0 bg-[#5f6a70]" />;
const Overflow = () => (
  <button aria-label="More tools" className="flex h-[28px] w-[9px] shrink-0 flex-col items-center justify-between bg-linear-to-b from-[#263137] to-[#1c2529] pb-[3px] pt-px">
    <svg width="8" height="6" viewBox="0 0 8 6" fill="none" stroke="#fff" strokeWidth="1.300"><path d="M1 .5l2.500 2.500L1 5.500M4.500.5L7 3 4.500 5.500" /></svg>
    <svg width="5" height="4" viewBox="0 0 5 4"><path d="M0 0h5L2.500 3.500z" fill="#fff" /></svg>
  </button>
);

function Combo({ v, cls, label }: { v: string; cls: string; label: string }) {
  return (
    <div className={"relative shrink-0 " + cls}>
      <select aria-label={label} className="h-[25px] w-full appearance-none rounded-xs border border-[#222c31] bg-[#303d45] pl-[3px] text-[13px] text-[#a9b5bb]"><option>{v}</option></select>
      <svg className="pointer-events-none absolute right-[6px] top-[10px]" width="10" height="6" viewBox="0 0 10 6"><path d="M0 0h10L5 5.500z" fill="#c5cdd1" /></svg>
    </div>
  );
}

function Ruler() {
  const cm = 37.8, zero = 108;
  const marks: React.ReactNode[] = [];
  for (let n = -2; n <= 18; n++) {
    const x = zero + n * cm;
    if (n !== 0 && n > -2) marks.push(<text key={"t" + n} x={x} y="17" textAnchor="middle" fontSize="13" fill="#a3afb5">{Math.abs(n)}</text>);
    if (n > -2) marks.push(<path key={"a" + n} d={`M${x - 10} 12h1`} stroke="#a3afb5" />);
    marks.push(<path key={"m" + n} d={`M${x + 19} 10v4M${x + 28} 12h1`} stroke="#a3afb5" />);
    if (n > -2) marks.push(<path key={"b" + n} d={`M${x + 10} 12h1`} stroke="#a3afb5" />);
  }
  const tabs = Array.from({ length: 12 }, (_, i) => 156 + i * 48);
  return (
    <svg className="h-[27px] w-full flex-1">
      <path d="M31.500 3.500h77v18h-77zM750.500 3.500h75v18h-75z" fill="none" stroke="#1a2226" />
      {marks}
      {tabs.map((x) => <path key={x} d={`M${x - 2} 22.500h5M${x + 0.5} 19v3`} stroke="#a3afb5" fill="none" />)}
      <path d="M102.500 2.500h11v3l-5 7-6-7zM108.500 12.500l5 7v3h-11v-3zM750.500 15l6 5v3h-12v-3z" fill="none" stroke="#000" />
    </svg>
  );
}

const W = ({ children }: P) => <span className="underline decoration-[#9aa5aa] decoration-wavy decoration-1 underline-offset-2">{children}</span>;
function Item({ n, children, cls = "" }: P & { n: React.ReactNode; cls?: string }) {
  return (
    <li className={"flex pl-[19px] " + cls}>
      <span className="w-[16px] shrink-0">{n}</span>
      <span>{children}</span>
    </li>
  );
}

function Sep({ cls = "" }: { cls?: string }) {
  return <span className={"h-full w-px shrink-0 bg-[#1f282d] " + cls} />;
}

function Writer() {
  return (
    <section className="flex min-w-0 flex-1 flex-col border border-[#35434a] bg-[#28333a] text-[#a9b5bb] font-['Noto_Sans',sans-serif]">
      <nav className="flex h-[36px] shrink-0 items-center bg-[#242e33] pt-px text-[13px]">
        {[["File", 0], ["Edit", 0], ["View", 0], ["Insert", 0], ["Format", 1], ["Table", 1], ["Tools", 0], ["Window", 0], ["Help", 0]].map(([m, a]) => (
          <button key={m} className="px-2"><Menu label={m as string} at={a as number} /></button>
        ))}
      </nav>
      <div className="flex h-[40px] shrink-0 items-center">
        <Grip /><span className="w-[3px]" />
        <Tools items={ROW1} />
        <span className="w-[3px]" /><Overflow />
        <span className="w-[7px]" /><Grip />
        <input aria-label="Find Text" placeholder="Find Text" className="ml-[8px] w-0 flex-1 bg-transparent text-[13px] placeholder:text-[#a9b5bb]" />
        <Overflow /><span className="w-[8px]" />
      </div>
      <div className="flex h-[40px] shrink-0 items-center">
        <Grip /><span className="w-[3px]" />
        <Tools items={["Styles"]} />
        <Combo label="Paragraph style" v="Default" cls="ml-[9px] w-[165px]" />
        <Combo label="Font name" v="Times New Roman" cls="ml-[9px] w-[185px]" />
        <Combo label="Font size" v="18" cls="ml-[9px] w-[73px]" />
        <span className="w-[8px]" />
        <button className="w-[25px] text-center font-['Liberation_Sans',sans-serif] text-[17px] font-bold text-white">B</button>
        <button className="w-[25px] text-center font-['Liberation_Serif',serif] text-[18px] font-bold italic text-white">I</button>
        <button className="w-[25px] text-center font-['Liberation_Sans',sans-serif] text-[16px] font-bold text-white underline underline-offset-2">U</button>
        <Tools items={ROW2} />
        <span className="flex-1" />
        <Overflow /><span className="w-[8px]" />
      </div>

      <div className="flex min-h-0 flex-1">
        <div className="flex min-w-0 flex-1 flex-col">
          <div className="flex min-h-0 flex-1 flex-col border-l-2 border-t-2 border-black">
            <div className="flex h-[27px] shrink-0 items-center">
              <button aria-label="Tab type" className="ml-[3px] flex size-5 items-center justify-center border border-[#1a2226]"><svg width="8" height="8" viewBox="0 0 8 8"><path d="M1.500 0v6.500H8" fill="none" stroke="#d5dcdf" strokeWidth="2.500" /></svg></button>
              <span className="w-[5px]" />
              <Ruler />
            </div>
            <div className="flex min-h-0 flex-1">
              <div className="w-[28px] shrink-0">
                <svg width="28" height="72"><path d="M3.500 19.500h19v46h-19z" fill="none" stroke="#1a2226" /><g fill="#a3afb5" fontSize="12"><text transform="translate(17 8) rotate(-90)">2</text><text transform="translate(17 44) rotate(-90)">27</text></g><path d="M12 19.500h3M13 9.500h1M13 27.500h1M13 47.500h1M12 56.500h3" stroke="#a3afb5" /></svg>
              </div>
              <div className="min-w-0 flex-1 overflow-hidden border-l border-t border-[#c3cdd1] font-['Liberation_Serif',serif] text-[16px] leading-[18px] text-[#111]">
                <div className="ml-[29px] mr-[34px] h-[69px] border-b-[3px] border-l border-r-[3px] border-[#b7c3c8]">
                  <div className="ml-[76px] mr-[75px] h-[17px] overflow-hidden border-b border-r border-[#bbb] bg-white text-center"><div className="-mt-[5px]">Figure 2: Radial layout</div></div>
                </div>
                <div className="ml-[29px] mr-[34px] mt-[14px] h-[1100px] border-l border-r-[3px] border-t border-[#b7c3c8]">
                  <div className="ml-[76px] mr-[75px] mt-[75px] h-[1000px] border border-[#bbb] bg-white">
                    <ol><Item n="3.">Select Hierarchical layout for the same graph.</Item></ol>
                    <div className="mx-[9px] h-[116px] border border-[#b8b8b8]" />
                    <p className="mt-[16px] pl-[15px] text-center">Figure 3: Hierarchical layout</p>
                    <p>1.3. <W>Customize</W> <W>visualization</W></p>
                    <ol className="mt-[4px]">
                      <Item n="1.">Load planar1.<W>graphml</W></Item>
                      <Item n="2." cls="mt-px">Left-click drag to select all nodes. You may need to zoom with <W>ctrl</W> + scroll to be able to select all nodes.</Item>
                      <Item n="3.">On the right sidebar, double click the circle node</Item>
                      <Item n="4." cls="mt-px">Right click on the circle node and click “Apply”. The nodes are now circular.</Item>
                    </ol>
                    <div className="pl-[20px]"><div className="mx-auto h-[282px] w-[381px] border border-[#b8b8b8]" /></div>
                    <p className="mt-[16px] pl-[15px] text-center">Figure 4: Circular nodes</p>
                    <p className="mt-px font-bold">2. <W>NetworkX</W></p>
                    <p><W>NetworkX</W> is a Python software for analysis of complex networks. Installation instructions are</p>
                    <p className="mt-px">given at <a href="https://networkx.github.io/documentation/networkx-1.10/install.html" className="underline underline-offset-2">https://networkx.github.io/documentation/networkx-1.10/install.html.</a></p>
                    <ol className="text-[#bcc4c8]">
                      <Item n={<i>1.</i>}>Install Python if you haven't yet</Item>
                      <Item n={<i>2.</i>} cls="mt-px">Make sure to have <W>setuptools</W>, <W>numpy</W>, and <W>matplotlib</W> installed first using pip (<W>e.g.</W> <i>pip install setuptools</i>, or <i>pip install -U numpy</i> to update an existing installation)</Item>
                    </ol>
                  </div>
                </div>
              </div>
              <div className="flex w-[17px] flex-col justify-between pl-[2px] pt-[246px]">
                <div className="h-[212px] w-[8px] rounded-xs bg-[#57636a]" />
                <div className="flex flex-col gap-[2px]">
                  {[0, 1, 2].map((i) => <button key={i} aria-label={"Navigate " + i} className="size-[6px] rounded-xs border border-[#39464d]" />)}
                </div>
              </div>
            </div>
            <div className="ml-[28px] mr-[17px] h-[8px] shrink-0 bg-[#5b676c]" />
          </div>
        </div>
        <aside className="flex w-[38px] shrink-0 flex-col items-center border-l border-[#1c2429] bg-[#263137]">
          <button aria-label="Sidebar settings" className="mt-[15px]"><svg width="12" height="10" viewBox="0 0 12 10" stroke="#0e0" fill="#0e0"><path d="M1 1.500h8M1 4.500h8M1 7.500h4" /><path d="M6 6.500h5L8.500 9z" stroke="none" /></svg></button>
          <span className="mt-[13px] h-px w-[24px] bg-[#171e22]" />
          <button aria-label="Properties" className="mt-[4px] flex size-8 items-center justify-center rounded-sm border border-[#c3cdd1]">
            <svg width="22" height="24" viewBox="0 0 22 24"><path d="M1 5l6-4 4 2v12l-5 3-5-3z" fill="#2196f3" /><path d="M11 5l5-2 5 3v8l-5 3-5-2z" fill="#6cc51c" /><path d="M6 13l5-2 5 2v6l-5 3-5-3z" fill="#8ee02c" /><path d="M1 5l5 2 5-2M6 7v10M1 10l5 2 5-2M11 7l5 2 5-2M16 9v7M6 14l5 2 5-2M11 16v6" stroke="#1d3c50" fill="none" /></svg>
          </button>
          <button aria-label="Styles" className="mt-[7px]"><svg width="24" height="24" viewBox="0 0 24 24"><path d="M9 4l10 9-14 8z" fill="#2c86d8" /><path d="M9 4c6 0 10 4 10 9" fill="none" stroke="#0c3c70" strokeWidth="3" /><circle cx="6" cy="6" r="4" fill="#e08020" /><circle cx="17" cy="19" r="4" fill="#7cc030" /><path d="M19 0l1.500 3 3 .5-2 2 .5 3-3-1.500-3 1.500.500-3-2-2 3-.5z" fill="#ffd040" /><circle cx="13" cy="3" r="2" fill="#b040e0" /><circle cx="2.500" cy="12" r="2" fill="#e040a0" /><circle cx="22" cy="12" r="2" fill="#e04040" /></svg></button>
          <button aria-label="Gallery" className="mt-[11px]"><svg width="24" height="24" viewBox="0 0 24 24"><path d="M1 8l15-7 3 12-14 6z" fill="#7cd050" stroke="#fff" /><path d="M1 9l18-6 4 14-16 5z" fill="#fff" /><path d="M4 10l13-4 3 9-11 4z" fill="#a8dcf8" /><path d="M7 16l5-3 7 1 1 2-11 3z" fill="#5cb050" /><circle cx="12" cy="12" r="3" fill="#e8f4ff" stroke="#37c" /></svg></button>
          <button aria-label="Navigator" className="mt-[11px]"><svg width="24" height="24" viewBox="0 0 24 24"><circle cx="12" cy="12" r="10" fill="#f4f4f4" stroke="#f09a20" strokeWidth="2.500" /><path d="M18 6l-4 8-4-4z" fill="#e03020" /><path d="M6 18l4-8 4 4z" fill="#3080e0" /><path d="M10.500 6.500v-3l3 3v-3" stroke="#444" fill="none" /></svg></button>
        </aside>
      </div>

      <footer className="flex h-[28px] shrink-0 items-center pt-px text-[12px]">
        <span className="w-[107px] pl-[11px]">Page 1 / 3</span><Sep />
        <span className="w-[101px] pl-[12px]">Default</span><Sep />
        <span className="w-[152px] pl-[2px] text-center">English (Australia)</span><Sep />
        <span className="w-[47px] text-center">INSRT</span><Sep />
        <span className="w-[36px] pl-[5px]">STD</span><Sep />
        <span className="w-[16px]" /><Sep />
        <span className="w-[29px]" /><Sep />
        <span className="flex-1" /><Sep />
        <span className="flex w-[77px] items-center justify-center gap-[6px]">
          <button aria-label="Single page"><svg width="9" height="12" viewBox="0 0 9 12"><path d="M.500.5h5l3 3v8h-8z" fill="#000" stroke="#fff" /></svg></button>
          <button aria-label="Multiple pages"><svg width="19" height="12" viewBox="0 0 19 12"><path d="M.5.5h5l3 3v8h-8zM10.500.5h5l3 3v8h-8z" fill="#000" stroke="#0ff" /></svg></button>
          <button aria-label="Book view"><svg width="17" height="12" viewBox="0 0 17 12"><path d="M3.500.5h5v11h-8v-8zM8.500.5h5l3 3v8h-8z" fill="#000" stroke="#fff" /></svg></button>
        </span><Sep />
        <span className="flex w-[143px] items-center justify-center gap-[5px]">
          <button aria-label="Zoom out"><svg width="11" height="11" viewBox="0 0 11 11"><circle cx="5.500" cy="5.500" r="5" fill="#000" stroke="#fff" /><path d="M3 5.500h5" stroke="#fff" strokeWidth="1.500" /></svg></button>
          <span className="relative h-[12px] w-[98px]">
            <input type="range" aria-label="Zoom" defaultValue={50} className="absolute inset-0 w-full opacity-0" />
            <svg className="pointer-events-none" width="98" height="12" viewBox="0 0 98 12"><path d="M0 5.500h98v2H0z" fill="#fff" stroke="#888" strokeWidth=".6" /><path d="M18.500 0v12M31.500 0v12M48.500 0v12" stroke="#8d979c" /><circle cx="48" cy="6" r="3.500" fill="#00f" stroke="#fff" /></svg>
          </span>
          <button aria-label="Zoom in"><svg width="11" height="11" viewBox="0 0 11 11"><circle cx="5.500" cy="5.500" r="5" fill="#000" stroke="#fff" /><path d="M3 5.500h5M5.500 3v5" stroke="#fff" strokeWidth="1.500" /></svg></button>
        </span><Sep />
        <span className="w-[51px] pl-[6px]">100 %</span>
      </footer>
    </section>
  );
}

/* ---------- status bar ---------- */
function StatusBar() {
  const div = <span className="h-[16px] w-px bg-[#46525a]" />;
  return (
    <header className="flex h-6 shrink-0 items-center bg-[#283238] font-['DejaVu_Sans',sans-serif] text-[14px] text-[#eceff1]">
      {["1", "2", "3"].map((n) => (
        <button key={n} className={"mr-px flex h-[22px] w-[19px] items-center justify-center border text-[13px] " + (n === "3" ? "border-white bg-[#16a085] text-[#263238]" : "border-[#4d585e] bg-[#222d32] text-[#c8d0d4]")}>{n}</button>
      ))}
      <span className="flex-1" />
      <span className="mr-[10px] flex gap-[10px]"><span>cpu</span><span>04%</span></span>
      {div}
      <span className="mx-[9px] flex items-center gap-[5px]">
        <svg width="12" height="12" viewBox="0 0 12 12" fill="none" stroke="#c8d0d4"><ellipse cx="6" cy="2.500" rx="5.500" ry="2" /><path d="M.5 2.500v7c0 2.700 11 2.700 11 0v-7M.5 6c0 2.700 11 2.700 11 0" /></svg>
        54.9 GiB
      </span>
      {div}
      <span className="mx-[10px] text-[#546168]">no lan</span>
      {div}
      <span className="ml-[8px] mr-[5px] flex items-center gap-[4px]">
        <svg width="13" height="9" viewBox="0 0 13 9"><path d="M0 0h12v2h1v5h-1v2H0z" fill="#fff" /></svg>
        87%
      </span>
      {div}
      <span className="ml-[9px]">28.08. 11:07</span>
      <span className="ml-[13px] mr-[6px] flex items-center gap-[10px]">
        <svg width="13" height="14" viewBox="0 0 13 14"><path d="M1 4.500h3l4-4v12l-4-3H1z" fill="#e8ecee" /><path d="M13 1L3 13" stroke="#9aa" strokeWidth="1.200" /></svg>
        <svg width="15" height="18" viewBox="0 0 15 18"><path d="M1.500 3h12v13.500h-12z" fill="none" stroke="#f4f6f7" strokeWidth="2" /><path d="M5 0h5v4H5z" fill="#f4f6f7" /><path d="M4.500 10l2 2.500L11 7" fill="none" stroke="#f4f6f7" strokeWidth="1.500" /></svg>
        <svg width="12" height="12" viewBox="0 0 12 12"><circle cx="6" cy="6" r="4.500" fill="#d8dde0" /><circle cx="6" cy="6" r="5.200" fill="none" stroke="#d8dde0" strokeWidth="1.500" strokeDasharray="2 2" /></svg>
        <svg width="12" height="11" viewBox="0 0 12 11"><path d="M0 8h2v3H0zM3 6h2v5H3z" fill="#e0e5e7" /><path d="M6 3h2v8H6zM9 0h3v11H9z" fill="#76828a" /></svg>
      </span>
    </header>
  );
}

export default function App() {
  return (
    <div className="flex h-screen flex-col overflow-hidden bg-[#1c2a55]">
      <StatusBar />
      <div className="flex h-[6px] shrink-0 justify-end overflow-hidden bg-[linear-gradient(90deg,#b4786c_0%,#c98a6c_15%,#bfa06c_28%,#c08a68_38%,#b98a62_44%,#8a4c60_49%,#c8788a_51%,#7c4a66_56%,#2c2c60_68%,#0c2454_80%,#0a2860_100%)]">
        <span className="mr-[134px] font-['Noto_Sans',sans-serif] text-[24px] leading-[18px] text-[#6d7c8c]">Tuesday</span>
      </div>
      <main className="flex min-h-0 flex-1">
        <div className="w-[6px] shrink-0 bg-[linear-gradient(180deg,#d98a78_0%,#f2857e_12%,#ee6c8a_19%,#ffb48c_27%,#f59a84_38%,#f08080_45%,#ffab8c_53%,#f7828c_65%,#ee6a80_80%,#e06480_100%)]" />
        <YEd />
        <div className="w-[10px] shrink-0 bg-[linear-gradient(180deg,#c8687c_0%,#d4887a_10%,#d8a87c_22%,#d6b27e_34%,#c07868_38%,#8c1c64_43%,#1c0444_47%,#a83c7c_50%,#5c1054_56%,#c06c84_66%,#5a1c58_80%,#2a1450_100%)]" />
        <Writer />
        <div className="w-[6px] shrink-0 bg-[linear-gradient(180deg,#0a2860_0%,#0c1c48_50%,#2c2454_100%)]" />
      </main>
      <div className="h-[5px] shrink-0 bg-[linear-gradient(90deg,#d8647c_0%,#a8607c_8%,#b06878_16%,#5c2850_28%,#20164c_38%,#7c3458_46%,#1c184c_50%,#602060_58%,#a8466c_66%,#b06068_76%,#7c4870_86%,#2c2858_100%)]" />
    </div>
  );
}
